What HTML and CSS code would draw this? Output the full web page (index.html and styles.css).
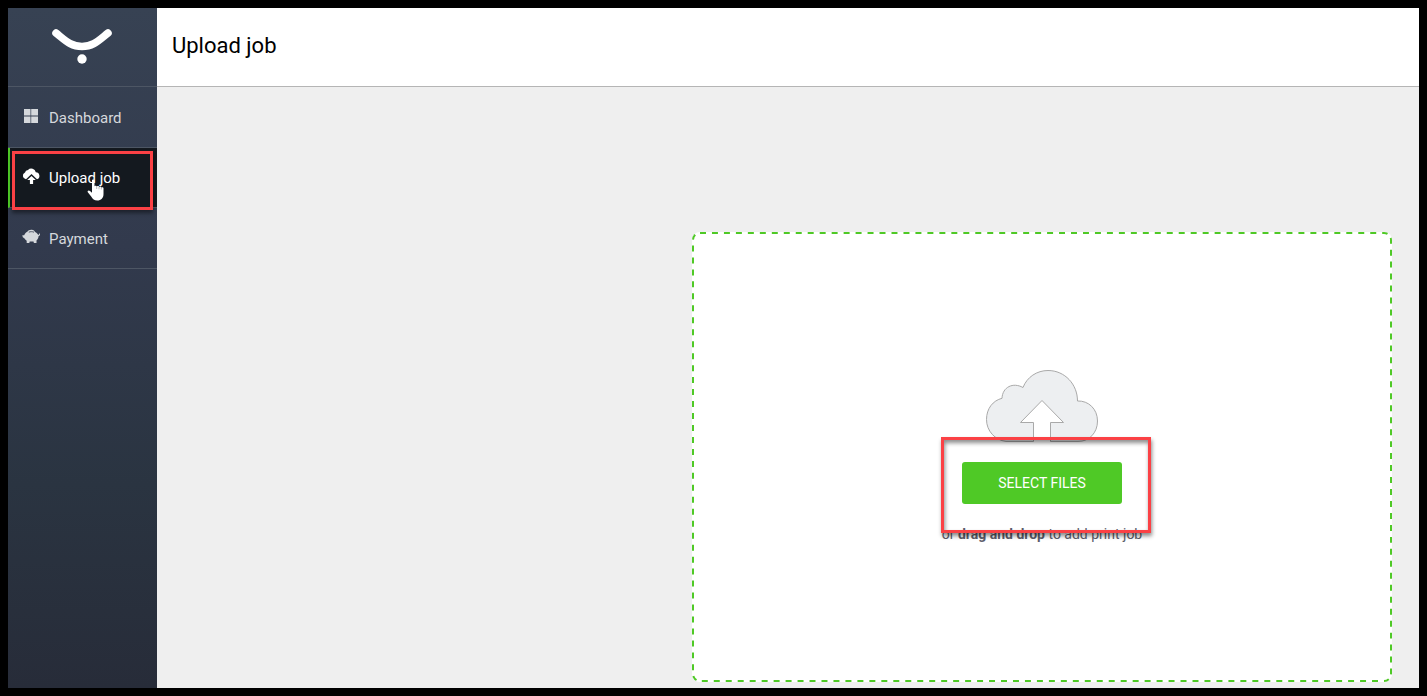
FILE: index.html
```html
<!DOCTYPE html>
<html lang="en">
  <head>
    <meta charset="utf-8" />
    <title>Upload job</title>
    <meta name="viewport" content="width=device-width, initial-scale=1" />
    <link rel="stylesheet" href="styles.css">
  </head>
  <body>
    <aside class="sidebar">
      <a class="logo" href="#" aria-label="Home">
        <svg width="60" height="36" viewBox="0 0 60 36">
          <path d="M4 4C14 12 19 17.500 30 17.500S46 12 56 4" fill="none" stroke="#fff" stroke-width="7.500" stroke-linecap="round" />
          <circle cx="30" cy="30" r="4.700" fill="#fff" />
        </svg>
      </a>
      <nav class="menu">
        <a class="menu-item" href="#">
          <svg class="menu-icon" viewBox="0 0 18 18" fill="currentColor">
            <path d="M2 2h6.500v6.500H2zM9.200 2H16v6.500H9.200zM2 9.500h6.500V16H2zM9.200 9.500H16V16H9.200z" />
          </svg>
          <span>Dashboard</span>
        </a>
        <a class="menu-item active" href="#">
          <svg class="menu-icon" viewBox="0 0 18 18" fill="currentColor">
            <path d="M4 12.300A3.500 3.500 0 0 1 3 5.600 3.200 3.200 0 0 1 6 3 4.600 4.600 0 0 1 13.800 5.300a3.600 3.600 0 0 1 1.200 7L9.500 7z" />
            <path d="M9.500 9l4.300 4.100h-2.700V17H7.900v-3.900H5.200z" />
          </svg>
          <span>Upload job</span>
          <svg class="pointer" width="17" height="22" viewBox="0 0 17 22">
            <path d="M5 1.500C5 .3 7.500 .3 7.500 1.500V7.500c0-1 2.300-1 2.300.3 0-1 2.400-1 2.400.4 0-1 2.300-1 2.300.5 0-.8 2-.8 2 .5V15c0 4-2.300 6.500-6.300 6.500-3 0-4.500-1.500-6-4L.8 13.200c-.8-1.500 1-2.500 2.200-1.200l2 1.800z" fill="#fff" />
            <path d="M9.700 7.500v2.500M12 8v2.300M14.300 8.500v2" fill="none" stroke="#777" stroke-width=".5" />
          </svg>
          <span class="highlight highlight-menu"></span>
        </a>
        <a class="menu-item" href="#">
          <svg class="menu-icon" viewBox="0 0 18 18" fill="currentColor">
            <path d="M.3 7.200h1.900C3 5.600 4 4.500 5.300 3.800 6 2.200 8 1.500 9.800 1.700c1.800.1 2.900 1 3.200 2.300 1.500.6 2.500 1.500 3.200 2.900.8 0 1-.4.800-1.400h.8c.5 1.600 0 2.500-1.300 2.700 0 1.700-.7 3.100-2 4.200V15h-2.600l-.4-1.500H7.700L7.300 15H4.700v-2.300C3.600 12 2.800 11.200 2.300 10.200L.8 9.300z" />
            <path d="M6.800 4.200C8.500 3.500 10.300 3.500 12 4.200" fill="none" stroke="#323a4b" stroke-width=".8" />
          </svg>
          <span>Payment</span>
        </a>
      </nav>
    </aside>
    <div class="page">
      <header class="page-header">
        <h1>Upload job</h1>
      </header>
      <main class="content">
        <section class="dropzone">
          <svg class="dropzone-outline">
            <rect width="100%" height="100%" rx="8" pathLength="2292" />
          </svg>
          <svg class="cloud" width="112" height="72" viewBox="0 0 112 72">
            <path d="M47.500 71.500H20C9 70 .5 61 .5 49.500c0-11 6.500-19 15.500-21.200C16.500 17 27 12 37 17.500 41 7 51 .5 62 .5c17 0 29.500 14 29.500 30.500 11-.5 20 8 20 20S103 71.500 92 71.500H64.500v-19H77.500L56 30.500l-21.500 22H47.500z" fill="#edeff1" stroke="#a9a9a9" />
          </svg>
          <div class="picker">
            <button class="btn" type="button">SELECT FILES</button>
            <span class="highlight highlight-picker"></span>
          </div>
          <p class="hint">or <strong>drag and drop</strong> to add print job</p>
        </section>
      </main>
    </div>
  </body>
</html>
```

FILE: styles.css
```css
* {
  box-sizing: border-box;
}
body {
  display: flex;
  min-height: 100vh;
  margin: 0;
  padding: 8px;
  background: #000;
  font-family: Roboto, sans-serif;
}
.sidebar {
  flex: 0 0 149px;
  background: linear-gradient(#374253, #323a4d 35%, #2a3441 70%, #272c39);
}
.logo {
  display: flex;
  justify-content: center;
  height: 79px;
  padding: 21px 2px 0 0;
  border-bottom: 1px solid #4d5664;
}
.menu-item {
  position: relative;
  display: flex;
  align-items: center;
  gap: 9px;
  height: 61px;
  padding: 2px 0 0 14px;
  border-bottom: 1px solid #4d5664;
  color: #d5d8dc;
  font-size: 15px;
  text-decoration: none;
}
.menu-item.active {
  height: 60px;
  padding: 0 0 0 12px;
  border-left: 2px solid #4fc926;
  background: #14191f;
  color: #fff;
}
.menu-icon {
  width: 18px;
  height: 18px;
  margin-bottom: 4px;
}
.pointer {
  position: absolute;
  top: 31px;
  left: 77px;
}
.page {
  display: flex;
  flex: 1;
  flex-direction: column;
  background: #efefef;
}
.page-header {
  display: flex;
  align-items: center;
  height: 79px;
  padding: 0 15px 4px;
  background: #fff;
  border-bottom: 1px solid #b5b5b5;
}
.page-header h1 {
  margin: 0;
  color: #000;
  font-size: 22px;
  font-weight: 400;
}
.content {
  display: flex;
  flex: 1;
  align-items: flex-end;
  justify-content: flex-end;
  padding: 24px 27px 6px;
}
.dropzone {
  position: relative;
  display: flex;
  flex-direction: column;
  align-items: center;
  justify-content: center;
  width: 100%;
  max-width: 700px;
  min-height: 450px;
  padding: 2px;
  border-radius: 8px;
  background: #fff;
}
/* half of the 4px stroke is clipped, which leaves a 2px dashed edge */
.dropzone-outline {
  position: absolute;
  inset: 0;
  width: 100%;
  height: 100%;
  border-radius: 8px;
  overflow: hidden;
}
.dropzone-outline rect {
  fill: none;
  stroke: #4fc926;
  stroke-width: 4px;
  stroke-dasharray: 6 6;
}
.cloud {
  margin-bottom: 20px;
}
.picker {
  position: relative;
}
.btn {
  display: block;
  width: 160px;
  height: 42px;
  border: 0;
  border-radius: 3px;
  background: #4fc926;
  color: #fff;
  font-family: inherit;
  font-size: 14px;
  cursor: pointer;
}
.hint {
  margin: 20px 0 0;
  color: #5d5d6b;
  font-size: 14px;
  line-height: 20px;
}
/* callout frames */
.highlight {
  position: absolute;
  border: 3px solid #fb4145;
  pointer-events: none;
}
.highlight-menu {
  inset: 3px 4px -3px 2px;
  box-shadow: 0 3px 4px rgba(0, 0, 0, 0.45);
}
.highlight-picker {
  inset: -25px -29px -29px -21px;
  box-shadow: 1px 3px 4px rgba(0, 0, 0, 0.45), inset 1px 3px 4px rgba(0, 0, 0, 0.45);
}
```
